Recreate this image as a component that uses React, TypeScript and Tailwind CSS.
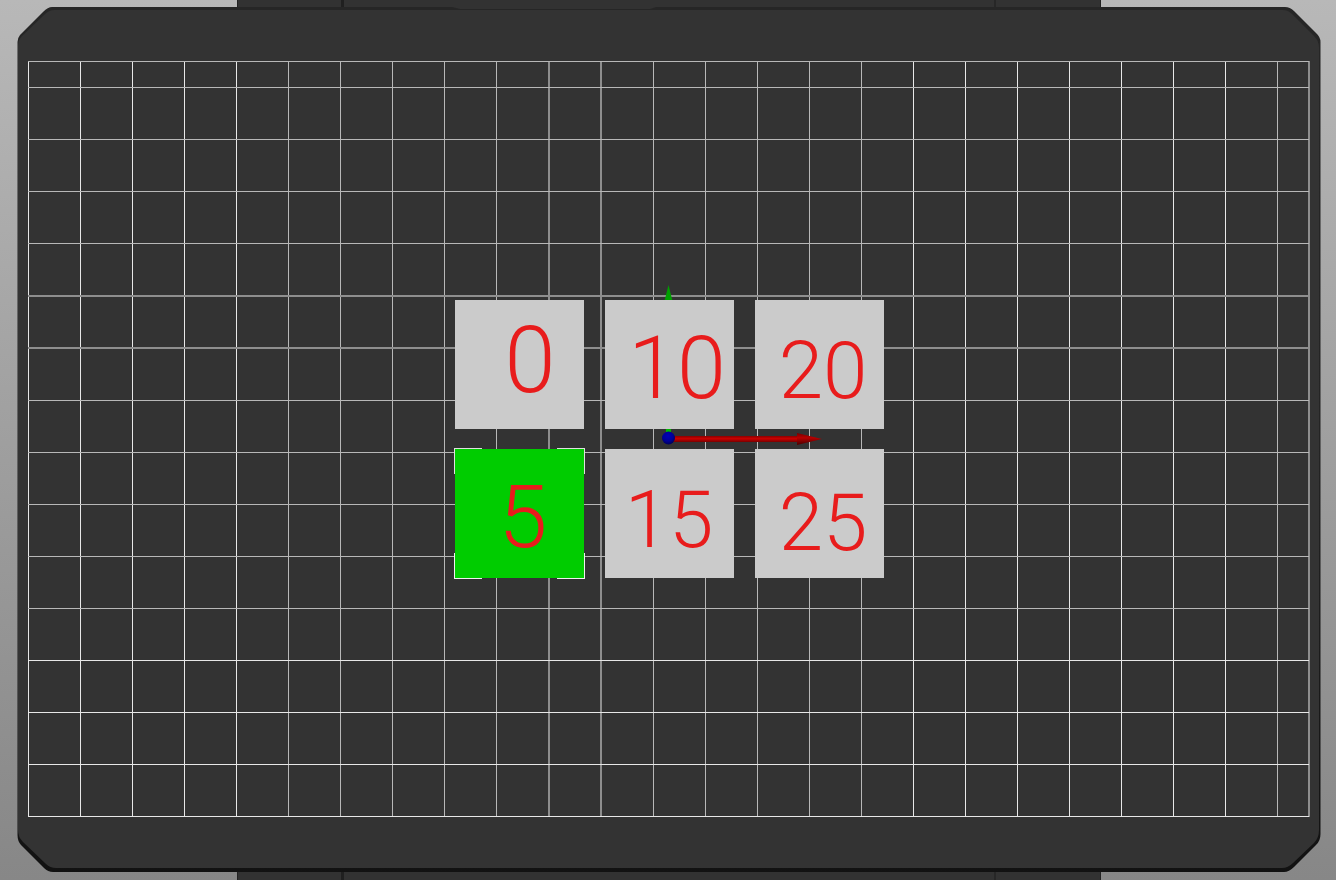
const verticals: [number, string][] = [
  [28, 'solid'], [80, 'solid'], [132, 'solid'], [184, 'solid'], [236, 'solid'],
  [288, 'dim'], [340, 'dim'], [392, 'dim'], [444, 'dim'], [496, 'dim'],
  [548, 'wide'], [600, 'wide'], [653, 'dim'], [705, 'dim'], [757, 'dim'],
  [809, 'dim'], [861, 'dim'], [913, 'solid'], [965, 'solid'], [1017, 'solid'],
  [1069, 'solid'], [1121, 'solid'], [1173, 'solid'], [1225, 'solid'], [1277, 'dim'],
  [1308, 'wide'],
];

const horizontals: [number, string][] = [
  [61, 'dim'], [87, 'dim'], [139, 'dim'], [191, 'dim'], [243, 'dim'],
  [295, 'wide'], [347, 'wide'], [400, 'dim'], [452, 'dim'], [504, 'dim'],
  [556, 'dim'], [608, 'dim'], [660, 'solid'], [712, 'solid'], [764, 'solid'],
  [816, 'solid'],
];

const lineFill: Record<string, string> = {
  solid: 'fill-[#e8e8e8]',
  dim: 'fill-[#b8b8b8]',
  wide: 'fill-[#8e8e8e]',
};

const thickness = (kind: string) => (kind === 'wide' ? 2 : 1);

const tiles = [
  { label: '0', text: 'pl-[22px] pb-[8px] text-[92px]' },
  { label: '10', text: 'pl-[16px] pt-[6px] text-[88px]' },
  { label: '20', text: 'pl-[8px] pt-[12px] text-[80px]' },
  { label: '5', text: 'pl-[8px] pt-[6px] text-[88px]', selected: true },
  { label: '15', text: 'pt-[12px] text-[80px]' },
  { label: '25', text: 'pl-[8px] pt-[18px] text-[80px]' },
];

function PrintBed() {
  return (
    <svg
      className="absolute inset-0 h-full w-full"
      viewBox="0 0 1336 880"
      preserveAspectRatio="xMidYMid slice"
      aria-hidden="true"
    >
      <defs>
        <linearGradient id="shaft" x1="0" y1="0" x2="0" y2="1">
          <stop offset="0" stopColor="#8c0000" />
          <stop offset="0.45" stopColor="#cc0000" />
          <stop offset="1" stopColor="#780000" />
        </linearGradient>
        <linearGradient id="head" x1="0" y1="0" x2="0" y2="1">
          <stop offset="0" stopColor="#760000" />
          <stop offset="0.4" stopColor="#b80000" />
          <stop offset="1" stopColor="#480000" />
        </linearGradient>
        <radialGradient id="ball" cx="0.45" cy="0.35" r="0.65">
          <stop offset="0" stopColor="#0000b8" />
          <stop offset="0.6" stopColor="#000098" />
          <stop offset="1" stopColor="#000058" />
        </radialGradient>
        <linearGradient id="rim" x1="0" y1="0" x2="0" y2="1">
          <stop offset="0" stopColor="#262626" />
          <stop offset="0.5" stopColor="#242424" />
          <stop offset="1" stopColor="#121212" />
        </linearGradient>
      </defs>

      <rect x="237" y="0" width="864" height="880" fill="#323232" />
      <path d="M237.5 0V880M1100.5 0V880" stroke="#222222" />
      <path d="M342.5 0V880" stroke="#202020" strokeWidth="3" />
      <path d="M995 0V880" stroke="#272727" strokeWidth="2" />

      <path
        d="M52 7H1285Q1290 7 1294 11L1316 33Q1320.500 37 1320.500 42V834Q1320.500 841 1316 845L1294 867Q1289 872 1284 872H53Q48 872 44 868L21 845Q17.500 841 17.500 835V42Q17.500 38 20 35L43 12Q48 7 52 7Z"
        fill="url(#rim)"
      />
      <path
        d="M54 10H1283Q1288 10 1292 14L1314 36Q1319 41 1319 47V830Q1319 838 1314 843L1293 863Q1288 868 1282 868H56Q50 868 46 864L23 842Q18 837 18 830V46Q18 40 22 36L44 15Q49 10 54 10Z"
        fill="#333333"
      />
      <path d="M452 7H656L650 9H460Z" fill="#323232" />

      {verticals.map(([x, kind]) => (
        <rect key={x} x={x} y="61" width={thickness(kind)} height="756" className={lineFill[kind]} />
      ))}
      {horizontals.map(([y, kind]) => (
        <rect key={y} x="28" y={y} width="1281" height={thickness(kind)} className={lineFill[kind]} />
      ))}

      <path d="M668.500 285L672.500 301H664.500Z" fill="#00a000" />
      <rect x="666" y="300" width="5" height="135" fill="#00b800" />
      <rect x="670" y="436" width="128" height="6" fill="url(#shaft)" />
      <path d="M797 433L822 439L797 445Z" fill="url(#head)" />
      <circle cx="668.500" cy="438" r="6.500" fill="url(#ball)" />
    </svg>
  );
}

function SelectionCorners() {
  return (
    <>
      <span className="absolute -left-px -top-px h-[26px] w-[28px] border-l-2 border-t-2 border-[#e0e0e0]" />
      <span className="absolute -right-px -top-px h-[26px] w-[28px] border-r-2 border-t-2 border-[#e0e0e0]" />
      <span className="absolute -bottom-px -left-px h-[26px] w-[28px] border-b-2 border-l-2 border-[#f0f0f0]" />
      <span className="absolute -bottom-px -right-px h-[26px] w-[28px] border-b-2 border-r-2 border-[#f0f0f0]" />
      <span className="absolute inset-0 bg-[#00cc00]" />
    </>
  );
}

export default function App() {
  return (
    <main className="relative flex min-h-screen items-center justify-center overflow-hidden bg-linear-to-b from-[#b8b8b8] to-[#878787] pb-[2px] pl-[2px] font-['Roboto',sans-serif]">
      <PrintBed />
      <div className="relative grid grid-cols-3 gap-x-[21px] gap-y-[20px]">
        {tiles.map((tile) => (
          <div key={tile.label} className="relative h-[129px] w-[129px] bg-[#cbcbcb]">
            {tile.selected && <SelectionCorners />}
            <div
              className={`relative flex h-full items-center justify-center leading-none font-light text-[#e81c1c] ${tile.text}`}
            >
              {tile.label}
            </div>
          </div>
        ))}
      </div>
    </main>
  );
}
